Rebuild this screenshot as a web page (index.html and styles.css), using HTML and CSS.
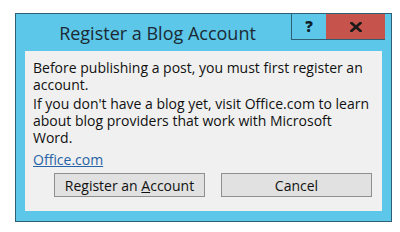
FILE: index.html
```html
<!DOCTYPE html>
<html lang="en">
<head>
    <meta charset="UTF-8">
    <title>Register a Blog Account</title>
    <link rel="stylesheet" href="styles.css">
</head>
<body>

    <!-- Dialog window -->
    <div class="window">
        <div class="titlebar">
            <div class="title">Register a Blog Account</div>
            <div class="help-btn">?</div>
            <div class="close-btn">
                <svg width="12" height="10" viewBox="0 0 12 10">
                    <path d="M1.5 1 L10.5 9 M10.5 1 L1.5 9" stroke="#1a1a1a" stroke-width="2.6" stroke-linecap="square"/>
                </svg>
            </div>
        </div>

        <div class="client">
            <p>Before publishing a post, you must first register an account.</p>
            <p>If you don't have a blog yet, visit Office.com to learn about blog providers that work with Microsoft Word.</p>
            <a href="#" class="link">Office.com</a>
            <div class="buttons">
                <button class="btn">Register an <u>A</u>ccount</button>
                <button class="btn">Cancel</button>
            </div>
        </div>
    </div>

</body>
</html>
```

FILE: styles.css
```css
/* Reset */
* {
    margin: 0;
    padding: 0;
    box-sizing: border-box;
}

body {
    font-family: "Open Sans", "Noto Sans", Arial, sans-serif;
    background-color: #ffffff;
    width: 400px;
    height: 232px;
    overflow: hidden;
}

/* Window frame */
.window {
    margin: 13px 0 0 15px;
    width: 377px;
    height: 209px;
    background-color: #5cc7e9;
    border: 1px solid #2f5f74;
    display: flex;
    flex-direction: column;
}

.titlebar {
    display: flex;
    height: 37px;
    align-items: flex-start;
}

.title {
    flex: 1;
    text-align: center;
    font-size: 18px;
    color: #1b2a33;
    padding: 7px 0 0 8px;
}

.help-btn {
    width: 35px;
    height: 26px;
    border-left: 1px solid #2f5f74;
    border-bottom: 1px solid #2f5f74;
    text-align: center;
    font-weight: 800;
    font-size: 15px;
    line-height: 24px;
    color: #10202a;
}

.close-btn {
    width: 59px;
    height: 26px;
    margin-right: 6px;
    background-color: #c6534c;
    border-bottom: 1px solid #2f5f74;
    display: flex;
    align-items: center;
    justify-content: center;
}

/* Client area */
.client {
    flex: 1;
    margin: 0 9px 10px 9px;
    background-color: #f0f0f0;
    padding: 8px 8px 0 8px;
    font-size: 14px;
    line-height: 17px;
    color: #111111;
}

.client p {
    margin-bottom: 2px;
}

.link {
    display: inline-block;
    color: #2763a6;
    margin-top: 3px;
}

.buttons {
    display: flex;
    justify-content: flex-end;
    gap: 16px;
    margin: 5px 2px 0 0;
}

.btn {
    width: 151px;
    height: 24px;
    background-color: #e1e1e1;
    border: 1px solid #8f8f8f;
    font-family: inherit;
    font-size: 14px;
    color: #111111;
}
```
